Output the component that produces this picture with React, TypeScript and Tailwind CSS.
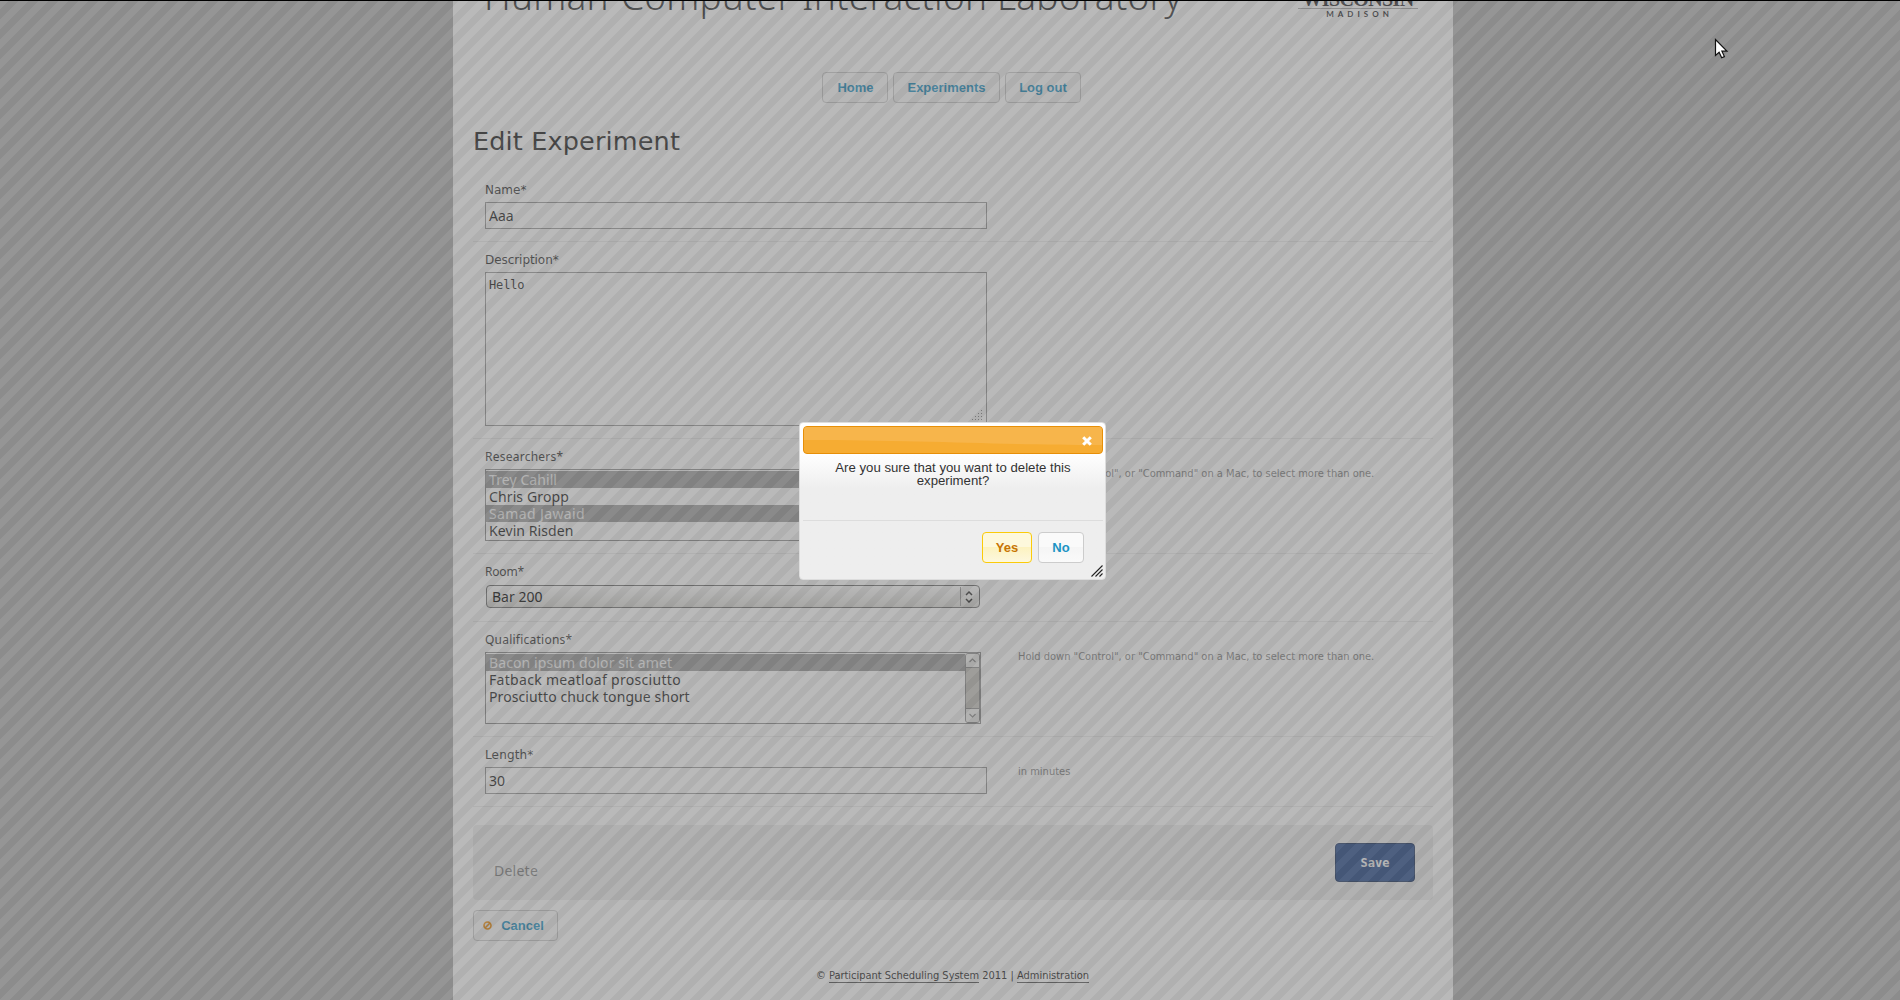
import type { ReactNode } from "react";

const DEJAVU = "font-['DejaVu_Sans',sans-serif]";
const NOTO = "font-['Noto_Sans',sans-serif]";

function UiButton({ children, className = "" }: { children: ReactNode; className?: string }) {
  return (
    <button
      className={`flex h-[31px] items-center justify-center rounded-[4px] border border-[#c8c8c8] bg-[#f6f6f6] font-['Liberation_Sans',sans-serif] text-[13px] leading-none font-bold text-[#1c8ebe] ${className}`}
    >
      {children}
    </button>
  );
}

function Row({ label, labelClass = DEJAVU, help, children }: { label: string; labelClass?: string; help?: string; children: ReactNode }) {
  return (
    <div className="flex border-b border-[#e8e8e8] pb-3 pl-3">
      <div className="w-[533px]">
        <div className={`h-[30px] pt-[10px] text-[12px] leading-4 text-[#333] ${labelClass}`}>{label}</div>
        {children}
      </div>
      {help && (
        <div className="pt-[27px] font-['DejaVu_Sans_Condensed','DejaVu_Sans',sans-serif] text-[11px] leading-4 tracking-[0.01px] whitespace-nowrap text-[#808080]">
          {help}
        </div>
      )}
    </div>
  );
}

function TextInput({ value }: { value: string }) {
  return (
    <div className="flex h-[27px] w-[502px] items-center border border-[#989898] bg-[#fafafa] pl-[3px] font-['Noto_Sans',sans-serif] text-[14px] leading-none text-[#1c1c1c]">
      {value}
    </div>
  );
}

function Option({ text, selected = false, spacing }: { text: string; selected?: boolean; spacing: string }) {
  return (
    <div
      className={`h-[17px] pl-[3px] font-['Noto_Sans',sans-serif] text-[14px] leading-[17px] whitespace-nowrap ${spacing} ${
        selected ? "bg-[#9c9c9c] text-[#f0f0f0]" : "text-[#1c1c1c]"
      }`}
    >
      {text}
    </div>
  );
}

function ScrollBar() {
  return (
    <div className="flex w-[15px] flex-col rounded-[3px] border border-[#8c8c8c] bg-[#c4c2bc]">
      <div className="flex h-[14px] items-center justify-center rounded-t-[2px] border-b border-[#8c8c8c] bg-[#ececea]">
        <svg width="7" height="5" viewBox="0 0 7 5" fill="none" stroke="#888" strokeWidth="1.2"><path d="M.5 4 3.5 1l3 3" /></svg>
      </div>
      <div className="flex-1" />
      <div className="flex h-[14px] items-center justify-center rounded-b-[2px] border-t border-[#8c8c8c] bg-[#ececea]">
        <svg width="7" height="5" viewBox="0 0 7 5" fill="none" stroke="#888" strokeWidth="1.2"><path d="M.5 1l3 3 3-3" /></svg>
      </div>
    </div>
  );
}

function Page() {
  return (
    <div className="ml-[453px] h-[1000px] w-[1000px] bg-[#fafafa] px-5">
      <header className="flex h-[72px] justify-between overflow-hidden">
        <h1 className="-mt-[24px] ml-[11px] font-['Noto_Sans',sans-serif] text-[37px] leading-10 font-light tracking-[0.2px] whitespace-nowrap text-[#2a2c2e]">
          Human-Computer Interaction Laboratory
        </h1>
        <div className="mr-[15px] -mt-[13px] w-[120px] text-center text-[#2a2a2e]">
          <div className="h-[22px] border-b border-[#a8a8a8] font-['Liberation_Serif',serif] text-[20px] leading-[24px] font-bold tracking-[-0.6px]">WISCONSIN</div>
          <div className="pl-[3px] font-['Lato',sans-serif] text-[8px] leading-[10px] font-bold tracking-[4px]">MADISON</div>
        </div>
      </header>
      <nav className="flex gap-[5px] pl-[349px]">
        <UiButton className="w-[66px] pl-px">Home</UiButton>
        <UiButton className="w-[107px]">Experiments</UiButton>
        <UiButton className="w-[76px]">Log out</UiButton>
      </nav>
      <h2 className={`mt-[22px] h-[47px] text-[25.5px] leading-8 tracking-[0.15px] text-[#222] ${DEJAVU}`}>Edit Experiment</h2>
      <form>
        <Row label="Name*"><TextInput value="Aaa" /></Row>
        <Row label="Description*" labelClass={`${DEJAVU} tracking-[-0.06px]`}>
          <div className="relative h-[154px] w-[502px] border border-[#989898] bg-[#fafafa] py-[4px] pl-[3px] font-['DejaVu_Sans_Mono',monospace] text-[12px] leading-4 tracking-[-0.15px] text-[#222]">
            Hello
            <svg className="absolute right-[3px] bottom-[4px]" width="11" height="11" fill="#888">
              {[0, 1, 2, 3].flatMap((r) =>
                Array.from({ length: r + 1 }, (_, c) => <rect key={`${r}-${c}`} x={9 - c * 3} y={r * 3} width="1" height="1" />),
              )}
            </svg>
          </div>
        </Row>
        <Row label="Researchers*" labelClass={`${NOTO} tracking-[0.24px]`} help={'Hold down "Control", or "Command" on a Mac, to select more than one.'}>
          <div className="h-[72px] w-[496px] border border-[#8c8c8c] bg-[#fafafa] pt-px">
            <Option text="Trey Cahill" selected spacing="tracking-[0.08px]" />
            <Option text="Chris Gropp" spacing="tracking-[0.12px]" />
            <Option text="Samad Jawaid" selected spacing="tracking-[0.38px]" />
            <Option text="Kevin Risden" spacing="tracking-[0.08px]" />
          </div>
        </Row>
        <Row label="Room*" labelClass={`${NOTO} tracking-[-0.2px]`}>
          <div className="flex h-[25px] pt-px pb-px pl-px">
            <div className="flex h-[23px] w-[494px] items-center justify-between rounded-[4px] border border-[#6c6c6c] bg-gradient-to-b from-[#f8f8f8] to-[#d8d7d3] pl-[5px] font-['Noto_Sans',sans-serif] text-[14px] leading-none text-black">
              Bar 200
              <div className="flex h-[19px] w-[19px] items-center border-l border-[#999] pl-[4px]">
                <svg width="8" height="12" viewBox="0 0 8 12" fill="none" stroke="#222" strokeWidth="1.5"><path d="M1 4l3-3 3 3M1 8l3 3 3-3" /></svg>
              </div>
            </div>
          </div>
        </Row>
        <Row label="Qualifications*" labelClass={`${NOTO} tracking-[0.23px]`} help={'Hold down "Control", or "Command" on a Mac, to select more than one.'}>
          <div className="flex h-[72px] w-[496px] border border-[#8c8c8c] bg-[#fafafa]">
            <div className="flex-1 pt-px">
              <Option text="Bacon ipsum dolor sit amet" selected spacing="tracking-[0.11px]" />
              <Option text="Fatback meatloaf prosciutto" spacing="tracking-[0.31px]" />
              <Option text="Prosciutto chuck tongue short" spacing="tracking-[0.1px]" />
            </div>
            <ScrollBar />
          </div>
        </Row>
        <Row label="Length*" labelClass={`${DEJAVU} tracking-[0.15px]`} help="in minutes"><TextInput value="30" /></Row>
      </form>
      <div className="mt-[18px] flex h-[75px] justify-between rounded-[4px] bg-[#eaeaea] pt-[18px] pr-[18px] pl-[21px]">
        <span className={`mt-[18px] h-5 text-[14px] leading-5 tracking-[0.24px] text-[#808080] ${NOTO}`}>Delete</span>
        <button className="h-[39px] w-20 rounded-[4px] border border-[#1c3460] bg-[#244888] font-['DejaVu_Sans_Mono',monospace] text-[12px] leading-none font-bold text-[#f4f4f4]">
          Save
        </button>
      </div>
      <div className="mt-[10px] flex">
        <UiButton className="w-[85px] gap-[9px] pr-[4px]">
          <svg width="9" height="9" viewBox="0 0 9 9" fill="none" stroke="#ef8c08" strokeWidth="1.6"><circle cx="4.5" cy="4.5" r="3.5" /><path d="M2 7 7 2" /></svg>
          Cancel
        </UiButton>
      </div>
      <footer className="mt-[27px] pr-px text-center font-['DejaVu_Sans_Condensed','DejaVu_Sans',sans-serif] text-[11px] leading-4 tracking-[-0.02px] text-[#222]">
        © <a className="border-b border-[#555]">Participant Scheduling System</a> 2011 | <a className="border-b border-[#555]">Administration</a>
      </footer>
    </div>
  );
}

function ConfirmDialog() {
  return (
    <div className="absolute top-[422px] left-[799px] flex h-[158px] w-[307px] flex-col rounded-[4px] border border-[#ddd] bg-gradient-to-b from-white from-[20%] to-[#eee] to-[42%] py-[3px] pr-[2px] pl-[3px] font-['Liberation_Sans',sans-serif]">
      <div className="relative flex h-7 items-center justify-end overflow-hidden rounded-[4px] border border-[#e78f08] bg-[#f6ac32] pr-[10px]">
        <svg className="absolute inset-0" width="299" height="26" preserveAspectRatio="none"><path d="M0 0H299V18C190 18 120 13 0 13Z" fill="#f7b54b" /></svg>
        <svg className="relative top-px" width="10" height="10" viewBox="0 0 10 10" stroke="#fff" strokeWidth="3"><path d="M1.2 1.2 8.8 8.8M8.8 1.2 1.2 8.8" /></svg>
      </div>
      <div className="h-[66px] pt-[7px] text-center text-[13.2px] leading-[13px] text-[#333]">
        Are you sure that you want to delete this
        <br />
        experiment?
      </div>
      <div className="flex justify-end gap-[6px] border-t border-[#ddd] pt-[11px] pr-[19px]">
        <button className="h-[31px] w-[50px] rounded-[4px] border border-[#fbcb09] bg-gradient-to-b from-[#fdf8dc] from-50% via-[#fcf2c0] via-50% to-[#fdf8de] text-[13px] leading-none font-bold text-[#c77405]">Yes</button>
        <button className="h-[31px] w-[46px] rounded-[4px] border border-[#ccc] bg-gradient-to-b from-[#fafafa] from-50% via-[#f5f5f5] via-50% to-[#fafafa] text-[13px] leading-none font-bold text-[#1c94c4]">No</button>
      </div>
      <svg className="absolute right-[2px] bottom-[2px]" width="12" height="12" fill="none" stroke="#222" strokeWidth="1.1"><path d="M.5 11.5l11-11M4.5 11.5l7-7M8.5 11.5l3-3" /></svg>
    </div>
  );
}

export default function App() {
  return (
    <div className="relative h-[1000px] w-[1900px] overflow-hidden bg-[#b2b2b2]">
      <Page />
      <div className="absolute inset-0 bg-[linear-gradient(135deg,#787878_25%,#666_25%,#666_50%,#787878_50%,#787878_75%,#666_75%)] bg-[length:20px_20px] opacity-50" />
      <div className="absolute inset-x-0 top-0 h-px bg-black" />
      <ConfirmDialog />
      <svg className="absolute top-[38px] left-[1714px]" width="16" height="23" viewBox="0 0 16 23">
        <path d="M1.5 1.5v16l3.6-3.3 2.6 5.6 2.7-1.2-2.5-5.4h5z" fill="#fff" stroke="#111" strokeWidth="1.2" />
      </svg>
    </div>
  );
}
